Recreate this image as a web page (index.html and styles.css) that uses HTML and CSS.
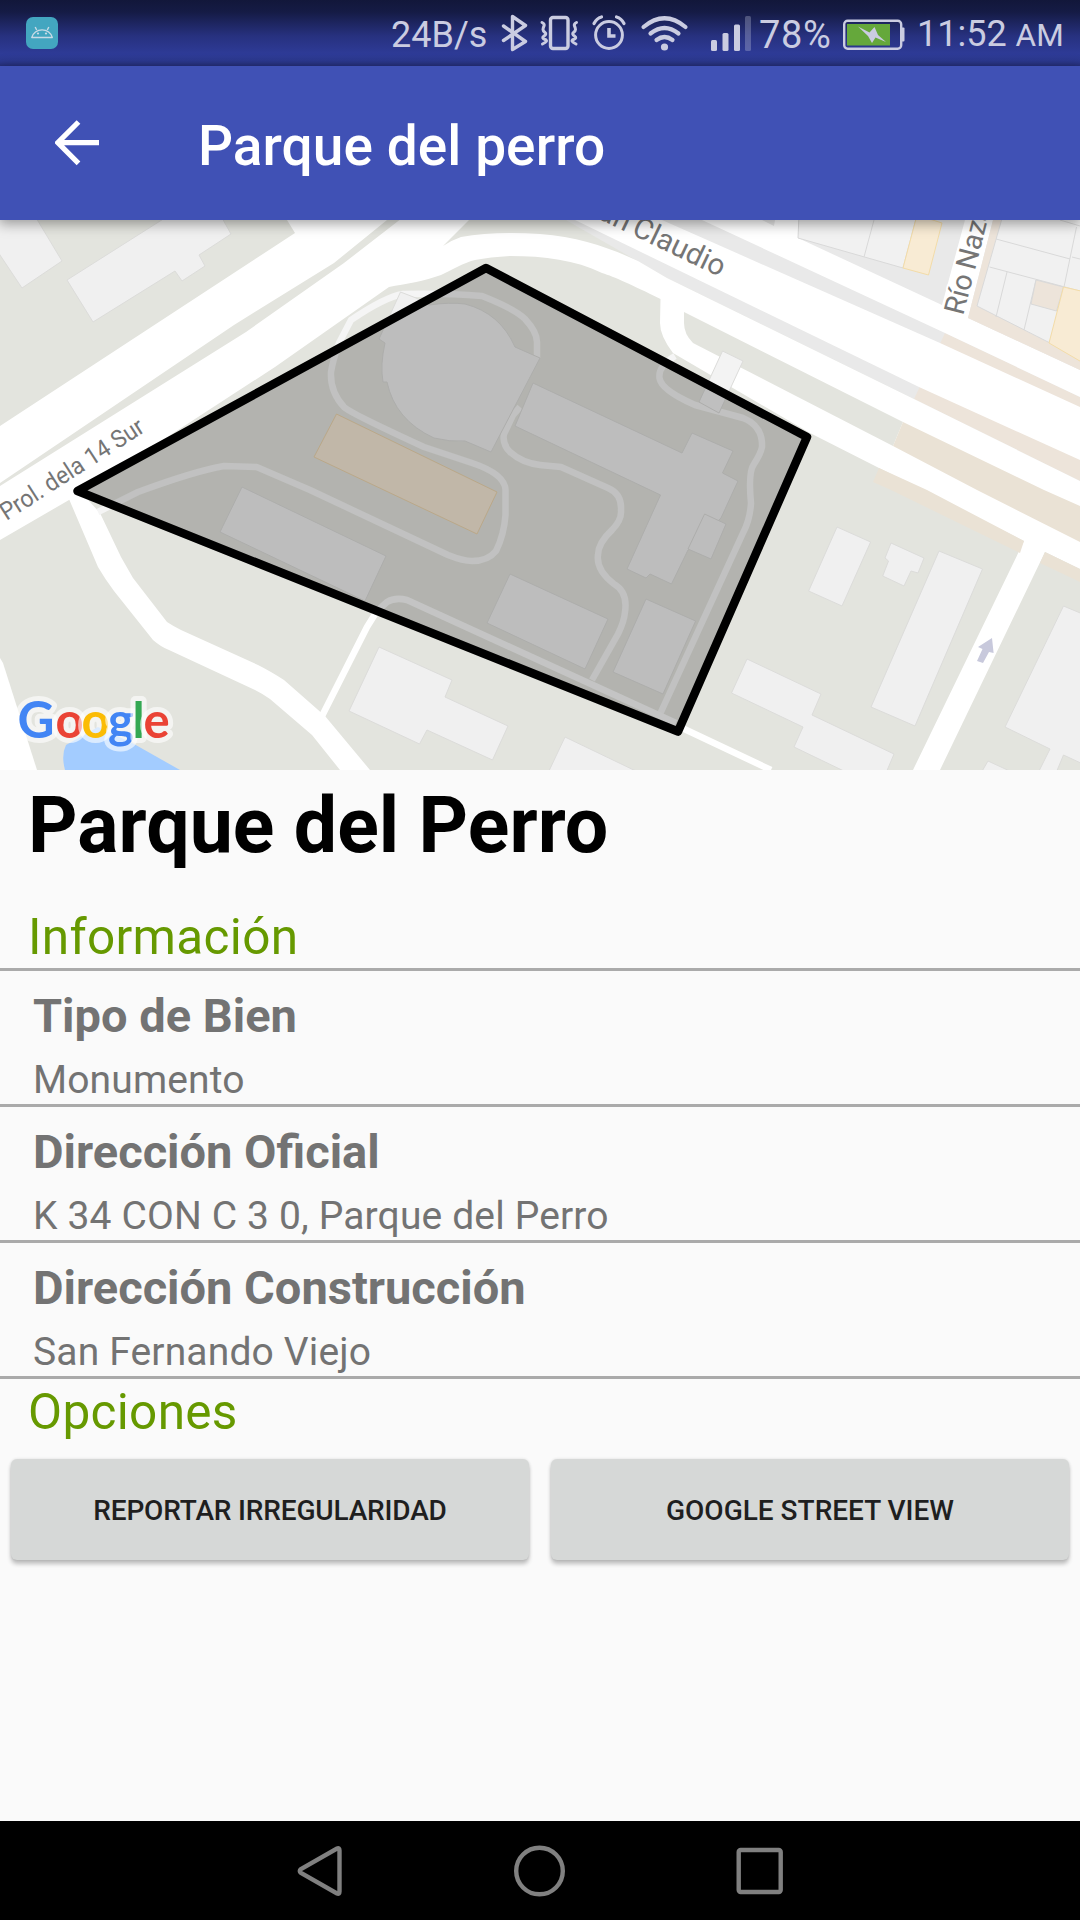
FILE: index.html
```html
<!DOCTYPE html>
<html lang="es">
<head>
<meta charset="utf-8">
<title>Parque del perro</title>
<link rel="stylesheet" href="styles.css">
</head>
<body>
<div class="screen">
  <header class="status">
    <svg class="app-icon" width="32" height="32" viewBox="0 0 32 32">
      <rect width="32" height="32" rx="7" fill="#43a6c0"/>
      <path d="M5.800 20.500a10.500 9.800 0 0 1 20.500 0zM9.200 10l1.500 3M22.800 10l-1.500 3" fill="none" stroke="#c9dbe6" stroke-width="1.400" stroke-linejoin="round"/>
      <circle cx="12" cy="16.500" r="1.100" fill="#c9dbe6"/><circle cx="20" cy="16.500" r="1.100" fill="#c9dbe6"/>
    </svg>
    <span class="speed">24B/s</span>
    <svg class="indicators" width="252" height="66" viewBox="500 0 252 66" fill="none" stroke="#cacce1">
      <path d="M503.500 26 525.500 41.500 512.500 49.500V16.500L525.500 25.500 503.500 40.500" stroke-width="3.400" stroke-linejoin="round" stroke-linecap="round"/>
      <rect x="550.500" y="17.500" width="17.500" height="31" rx="2.500" stroke-width="3.400"/>
      <path d="M542 22.500q3 1.500 2 3.500t-1 3.500 2 3 -1 3.500 1 3.500-2.500 4.500M576.500 22.500q-3 1.500-2 3.500t1 3.500-2 3 1 3.500-1 3.500 2.500 4.500" stroke-width="3" stroke-linecap="round"/>
      <circle cx="609" cy="35" r="13.400" stroke-width="3"/>
      <path d="M609 28v8h6.500" stroke-width="3.600"/>
      <path d="M594 23.500q2.500-5 7.500-6.500M624 23.500q-2.500-5-7.500-6.500" stroke-width="3.200" stroke-linecap="round"/>
      <path d="M643.500 27q21-17.500 42 0M650.500 33.500q14-11 28 0M656.500 40q8-6 16 0" stroke-width="4.200" stroke-linecap="round"/>
      <circle cx="664.500" cy="47" r="3.600" fill="#cacce1" stroke="none"/>
      <g fill="#cacce1" stroke="none">
        <rect x="711" y="40" width="6" height="11" rx="1.500"/><rect x="722.500" y="33" width="6" height="18" rx="1.500"/>
        <rect x="734" y="24.500" width="6" height="26.500" rx="1.500"/><rect x="745" y="16" width="6" height="35" rx="1.500" opacity=".3"/>
      </g>
    </svg>
    <span class="percent">78%</span>
    <svg class="battery" width="62" height="32" viewBox="0 0 62 32">
      <rect x="1.200" y="1.700" width="57" height="28" rx="3.500" fill="none" stroke="#cacce1" stroke-width="2.400"/>
      <path d="M58.500 8.500h2a1 1 0 0 1 1 1v12a1 1 0 0 1-1 1h-2z" fill="#cacce1"/>
      <rect x="4" y="5" width="43" height="21.500" fill="#65a83b"/>
      <path d="M15 7.500 26.500 13.500 31.500 8 35 16 43 23 32.500 18.500 29 24 25 17z" fill="#cacce1"/>
    </svg>
    <span class="clock">11:52 <small class="meridiem">AM</small></span>
  </header>

  <nav class="appbar">
    <svg class="back" width="44" height="46" viewBox="0 0 44 46" fill="none" stroke="#fff" stroke-width="5.200">
      <path d="M44 22.700H4M23.500 2 2.800 22.700 23.500 43.400"/>
    </svg>
    <h1 class="appbar-title">Parque del perro</h1>
  </nav>

  <svg class="map" width="1080" height="550" viewBox="0 220 1080 550">
    <rect y="220" width="1080" height="550" fill="#e3e4de"/>

    <!-- city blocks north of the avenue -->
    <path d="M566 220H1080V481L914 399 667 278z" fill="#e9e9e9"/>
    <path d="M945 333 1080 397V481L914 399z" fill="#ede4da"/>

    <!-- avenues -->
    <g fill="#fff">
      <path d="M0 426 295 233 287 220H469L443 246Q452 240 461 237 495 231 540 234C580 237 610 248 638 261L667 278 914 399 1080 481V569L1045 552 940 770H913L1024 541 879 468 810 433 673 353Q660 336 660 323L660.500 299C630 284 615 277 602 273 575 260 545 256 510 256Q490 257 475 260C465 262 450 271 441 275 425 281 405 284 389 287L275 367 155 445 69 500 0 540z"/>
      <path d="M575 220H662L940 343 1080 407V460L919 387z"/>
      <path d="M702 220H762L774 226 775 220H799L798 238 942 305 965 220H993L968 318 1080 370V397L945 333z"/>
      <path d="M0 658 3 663 37 770H0z"/>
      <path d="M69 499 98 567Q105 579 114 591L153 640Q161 647 169 650L255 690Q263 694 270 699L312 735 340 770H370L325 716 284 680Q270 671 258 665L181 630Q173 626 167 622L133 578 121 557 100 513 79 490z"/>
    </g>
    <path d="M387 220 334 263 234 325 0 483V486L246 332 344 263 399.500 220z" fill="#e3e4de"/>
    <path d="M684 312 903 422 893 446 693 343Q684 334 684 323z" fill="#e3e4de"/>
    <path d="M903 422 1044 490 1080 506V542L977 490 893 446zM879 468 927 490 1024 541 1020 553 891 490 873 482zM1045 552 1080 569V582L1040 563z" fill="#eae2d5"/>
    <path d="M993 220H1002L977 306 1050 343 1080 360V370L968 318z" fill="#ede4da"/>

    <!-- lots -->
    <g fill="#f1f1f1" stroke="#d9d9d9">
      <path d="M799 215 798 238 903 268 917 215zM874 220 864 257"/>
      <path d="M1003 215 977 306 1050 343 1085 362V215z"/>
      <path fill="none" d="M996 239 1070 259M989.500 267 1080 291M1007 272 996 317M1036 280 1024 330M1076.500 227 1064 287M1060 220 1080 226M1072 257 1080 259"/>
      <path d="M1036 280 1063.500 287 1056.500 311 1031 304z" fill="#ede4da"/>
    </g>
    <path d="M917 215 942 223 928.500 275 903 268zM1063.500 287 1085 292V364L1049 343z" fill="#f8ebd4" stroke="#f3dca8"/>

    <!-- footpaths -->
    <g fill="none" stroke="#f5f5f5" stroke-width="6.500" stroke-linejoin="round">
      <path d="M537 358V342Q537 332 525 319 515 309 482 296 445 293 403 294 385 297 351 320L339 343Q333 360 331 372 330 392 344 407 350 413 424 447L472 463Q505 474 505.500 490V515Q504 535 496 551 488 561 472 561 463 561 448 555L310 490 256.600 467 224 466Q195 471 138 492L98 512"/>
      <path d="M520 407 513 415 504 434Q502 444 510 452 522 463 540 465L561 467 608 488Q622 494 621 510 622 520 612 530 598 543 598 555 596 570 614 584 628 592 625 612 624 622 618 634L592 680"/>
      <path d="M675 356Q658 366 659.500 378 661 390 695 405L743 418Q763 426 762 447 761 453 754 464 748 472 751 503 750 520 743 533L660.500 713"/>
      <path d="M375 613 387 602Q395 597 407 600L676 723" stroke="#f9f9f9"/>
      <path d="M322 716 367 627 377 611M680 727 771 770" stroke="#fff"/>
    </g>

    <!-- buildings -->
    <g fill="#f0f0f0" stroke="#dcdcda">
      <path d="M-2 252 22 288 62 261 35 216H-2z"/>
      <path d="M67 280 93 322 175 271 182 281 205 266 199 255 231 234 221 216H168z"/>
      <path d="M400.500 292 416 298 429 305Q450 302 465 304 500 313 515 347L540 358 491 452 465 441Q450 442 434 438 395 420 387 382H383Q380 365 385 343L379 339z"/>
      <path d="M242 487 386 556 365 601 220 532z"/>
      <path d="M533 383 515 426 660.500 495 627 569 646 578 650 574 671.500 584 688 550 721 518 738 481 722.500 473 733 451 692 433 682 453z"/>
      <path d="M704.600 514 726 524 711 559 688 549z"/>
      <path d="M510 574 608 619 585 669 487 623z"/>
      <path d="M646 599 695.600 621 663 694 613 672z"/>
      <path d="M837 527 870.600 542 842 606 808.600 591z"/>
      <path d="M891 543 924 558 918 573 911 571 904 586 882.700 576 888.500 561 885 558z"/>
      <path d="M939 551 982.500 569 915 726 871 707z"/>
      <path d="M747 659 821 694 812 715 894 754 886 773H848L794 747 803 727 731.500 693z"/>
      <path d="M1063.500 606 1085 615V765L1063.500 755 1056 773H1038L1050 749 1005 727z"/>
      <path d="M988 761 1014 773H981z"/>
      <path d="M565 737 640 773H548z"/>
      <path d="M379 647 452 680 445 697 508 726 492.500 760 427 730 419.500 744 349 711z"/>
      <path d="M722.500 351 743 361 719 413 699 402z" fill="#f3f3f3"/>
    </g>
    <path d="M336.500 414 497 492 477 534 314 457z" fill="#f5e8d5" stroke="#ecd5ae"/>
    <path d="M66 745Q61 755 65 770H180L134 744 98 727z" fill="#a3ccff"/>
    <path d="M992 638 993.600 653 989 652 983 663 977 661 982.500 649 978 647z" fill="#c8c9dc"/>

    <g class="road-label">
      <text transform="translate(6.500 521) rotate(-32.800)" font-size="24.500" textLength="166" lengthAdjust="spacingAndGlyphs">Prol. dela 14 Sur</text>
      <text transform="translate(720 277) rotate(25.600)" font-size="29.500" text-anchor="end" word-spacing="-2">San Claudio</text>
      <text transform="translate(963 316) rotate(-75.500)" font-size="28.500" word-spacing="-1.500">Río Nazaret</text>
    </g>

    <path d="M486 268 807 437 678 731.500 77.500 491z" fill="#000" fill-opacity=".21" stroke="#000" stroke-width="8.500" stroke-linejoin="round"/>

    <text class="logo" y="738"><tspan x="17.500" fill="#4285f4" font-size="51">G</tspan><tspan x="55.500" fill="#ea4335">o</tspan><tspan x="81.500" fill="#fbbc05">o</tspan><tspan x="108" fill="#4285f4">g</tspan><tspan x="132.500" fill="#34a853">l</tspan><tspan x="143.500" fill="#ea4335">e</tspan></text>
  </svg>

  <main class="content">
    <h2 class="place">Parque del Perro</h2>
    <h3 class="section section-info">Información</h3>
    <dl class="facts">
      <div class="fact"><dt class="name">Tipo de Bien</dt><dd class="value">Monumento</dd></div>
      <div class="fact"><dt class="name">Dirección Oficial</dt><dd class="value">K 34 CON C 3 0, Parque del Perro</dd></div>
      <div class="fact"><dt class="name">Dirección Construcción</dt><dd class="value">San Fernando Viejo</dd></div>
    </dl>
    <h3 class="section section-options">Opciones</h3>
    <div class="actions">
      <button class="action action-report" type="button">REPORTAR IRREGULARIDAD</button>
      <button class="action" type="button">GOOGLE STREET VIEW</button>
    </div>
  </main>

  <footer class="navbar">
    <svg width="46" height="54" viewBox="0 0 46 54"><path d="M40 4.500Q42.500 3.500 42.500 6.500V47.500Q42.500 50.500 40 49.500L4 29Q1.500 27 4 25z"/></svg>
    <svg width="54" height="54" viewBox="0 0 54 54"><circle cx="26.500" cy="27" r="23.300"/></svg>
    <svg width="48" height="54" viewBox="0 0 48 54"><rect x="2.700" y="6" width="42" height="42" rx="2"/></svg>
  </footer>
</div>
</body>
</html>
```

FILE: styles.css
```css
* { box-sizing: border-box; }

body {
  margin: 0;
  font-family: Roboto, "Liberation Sans", sans-serif;
  background: #fafafa;
}

h1, h2, h3, dl, dd { margin: 0; }

.screen {
  display: flex;
  flex-direction: column;
  width: 1080px;
  height: 1920px;
  overflow: hidden;
}

.status {
  display: flex;
  align-items: center;
  height: 66px;
  flex: none;
  padding-left: 26px;
  color: #cacce1;
  font-size: 36px;
  line-height: 66px;
  white-space: nowrap;
  background: linear-gradient(#12173a 0, #151b45 12px, #27317f 36px, #2e3b97 54px, #2c3990 61px, #26307c 66px);
}
.app-icon { margin-right: 333px; }
.speed { width: 109px; padding-top: 4px; }
.percent { width: 91px; padding: 3px 0 0 7px; font-size: 38px; letter-spacing: .6px; }
.battery { margin: 3px 12px 0 0; }
.clock { padding-top: 4px; }
.meridiem { font-size: 31.5px; }

.appbar {
  position: relative;
  z-index: 1;
  display: flex;
  align-items: center;
  height: 154px;
  flex: none;
  padding-left: 55px;
  background: #4051b5;
  box-shadow: 0 3px 12px 1px rgba(0, 0, 0, .36);
}
.appbar-title {
  margin-left: 99px;
  padding-top: 6px;
  color: #fff;
  font-size: 55px;
  font-weight: 500;
  letter-spacing: .07px;
  line-height: 64px;
}

.map { display: block; flex: none; }
.road-label {
  fill: #757575;
  stroke: #fff;
  stroke-width: 4px;
  stroke-linejoin: round;
  paint-order: stroke;
}
.logo {
  font-family: Lato, sans-serif;
  font-size: 49px;
  font-weight: 700;
  stroke: rgba(255, 255, 255, .6);
  stroke-width: 10px;
  stroke-linejoin: round;
  paint-order: stroke;
}

.content { flex: 1; padding-top: 11px; }
.place {
  padding-left: 28px;
  font-size: 77px;
  letter-spacing: .08px;
  line-height: 90px;
  color: #000;
}
.section {
  padding-left: 28px;
  color: #690;
  font-size: 49.5px;
  font-weight: 400;
  letter-spacing: .32px;
  line-height: 58px;
}
.section-info { margin-top: 37px; padding-bottom: 2px; border-bottom: 3px solid #aaa; }
.section-options { padding-top: 4px; }

.fact {
  height: 136px;
  padding: 17px 33px 0;
  color: #737373;
  border-bottom: 3px solid #aaa;
}
.name { font-size: 47px; font-weight: 700; line-height: 55px; }
.value { margin-top: 15px; font-size: 39px; letter-spacing: .15px; line-height: 45px; }

.actions { display: flex; gap: 22px; margin-top: 18px; padding: 0 11px; }
.action {
  flex: 1;
  height: 101px;
  padding: 2px 0 0;
  border: 0;
  border-radius: 6px;
  background: #d6d8d7;
  color: #1f1f1f;
  font: 500 28px Roboto, sans-serif;
  box-shadow: 0 4px 4px rgba(0, 0, 0, .24), 0 0 3px rgba(0, 0, 0, .12);
}
.action-report { letter-spacing: -.16px; }

.navbar {
  display: flex;
  align-items: center;
  height: 99px;
  flex: none;
  padding-left: 297px;
  background: #000;
}
.navbar svg { fill: none; stroke: #808080; stroke-width: 4.4px; margin-right: 169.5px; }
```
